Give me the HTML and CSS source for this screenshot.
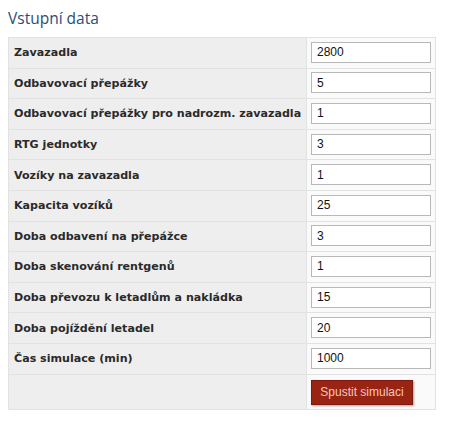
FILE: index.html
```html
<!DOCTYPE html>
<html>
<head>
<meta charset="utf-8">
<link rel="stylesheet" href="styles.css">
</head>
<body>
<h2 class="title">Vstupní data</h2>
<table class="form">
<tr><th>Zavazadla</th><td><input class="inp" value="2800"></td></tr>
<tr><th>Odbavovací přepážky</th><td><input class="inp" value="5"></td></tr>
<tr><th>Odbavovací přepážky pro nadrozm. zavazadla</th><td><input class="inp" value="1"></td></tr>
<tr><th>RTG jednotky</th><td><input class="inp" value="3"></td></tr>
<tr><th>Vozíky na zavazadla</th><td><input class="inp" value="1"></td></tr>
<tr><th>Kapacita vozíků</th><td><input class="inp" value="25"></td></tr>
<tr><th>Doba odbavení na přepážce</th><td><input class="inp" value="3"></td></tr>
<tr><th>Doba skenování rentgenů</th><td><input class="inp" value="1"></td></tr>
<tr><th>Doba převozu k letadlům a nakládka</th><td><input class="inp" value="15"></td></tr>
<tr><th>Doba pojíždění letadel</th><td><input class="inp" value="20"></td></tr>
<tr><th>Čas simulace (min)</th><td><input class="inp" value="1000"></td></tr>
<tr class="last"><th></th><td><button class="btn">Spustit simulaci</button></td></tr>
</table>
</body>
</html>
```
FILE: styles.css
```css
body {
  margin: 0;
  padding: 0 8px;
  background: #fff;
  font-family: "DejaVu Sans", Verdana, sans-serif;
}
.title {
  margin: 0;
  padding-top: 9px;
  height: 28px;
  box-sizing: border-box;
  font-family: "Open Sans", "Noto Sans", sans-serif;
  font-weight: normal;
  font-size: 15.5px;
  line-height: 19px;
  color: #284d78;
}
.form {
  border-collapse: collapse;
  width: 428px;
  margin-top: 9px;
}
.form th, .form td {
  border: 1px solid #e2e2e2;
  height: 29.6px;
  padding: 0;
}
.form th {
  background: #eeeeee;
  text-align: left;
  font-size: 11.1px;
  font-weight: bold;
  color: #2a2a2a;
  padding-left: 5px;
  width: 292px;
}
.form td {
  background: #fafafa;
  padding-left: 4px;
}
.inp {
  display: block;
  box-sizing: border-box;
  width: 120px;
  height: 21px;
  margin-top: -1px;
  border: 1px solid #b8b8b8;
  background: #fff;
  padding: 0 0 0 5px;
  font-family: "Liberation Sans", Arial, sans-serif;
  font-size: 12px;
  color: #111;
}
.last th, .last td {
  height: 34px;
}
.btn {
  display: block;
  width: 102px;
  height: 25px;
  background: #9a2413;
  border: 1px solid #7e1a0c;
  box-shadow: 1px 1px 2px rgba(0,0,0,0.35);
  color: #f6c6b8;
  font-family: "Liberation Sans", Arial, sans-serif;
  font-size: 12px;
  padding: 0;
  margin-top: 1px;
}
```
